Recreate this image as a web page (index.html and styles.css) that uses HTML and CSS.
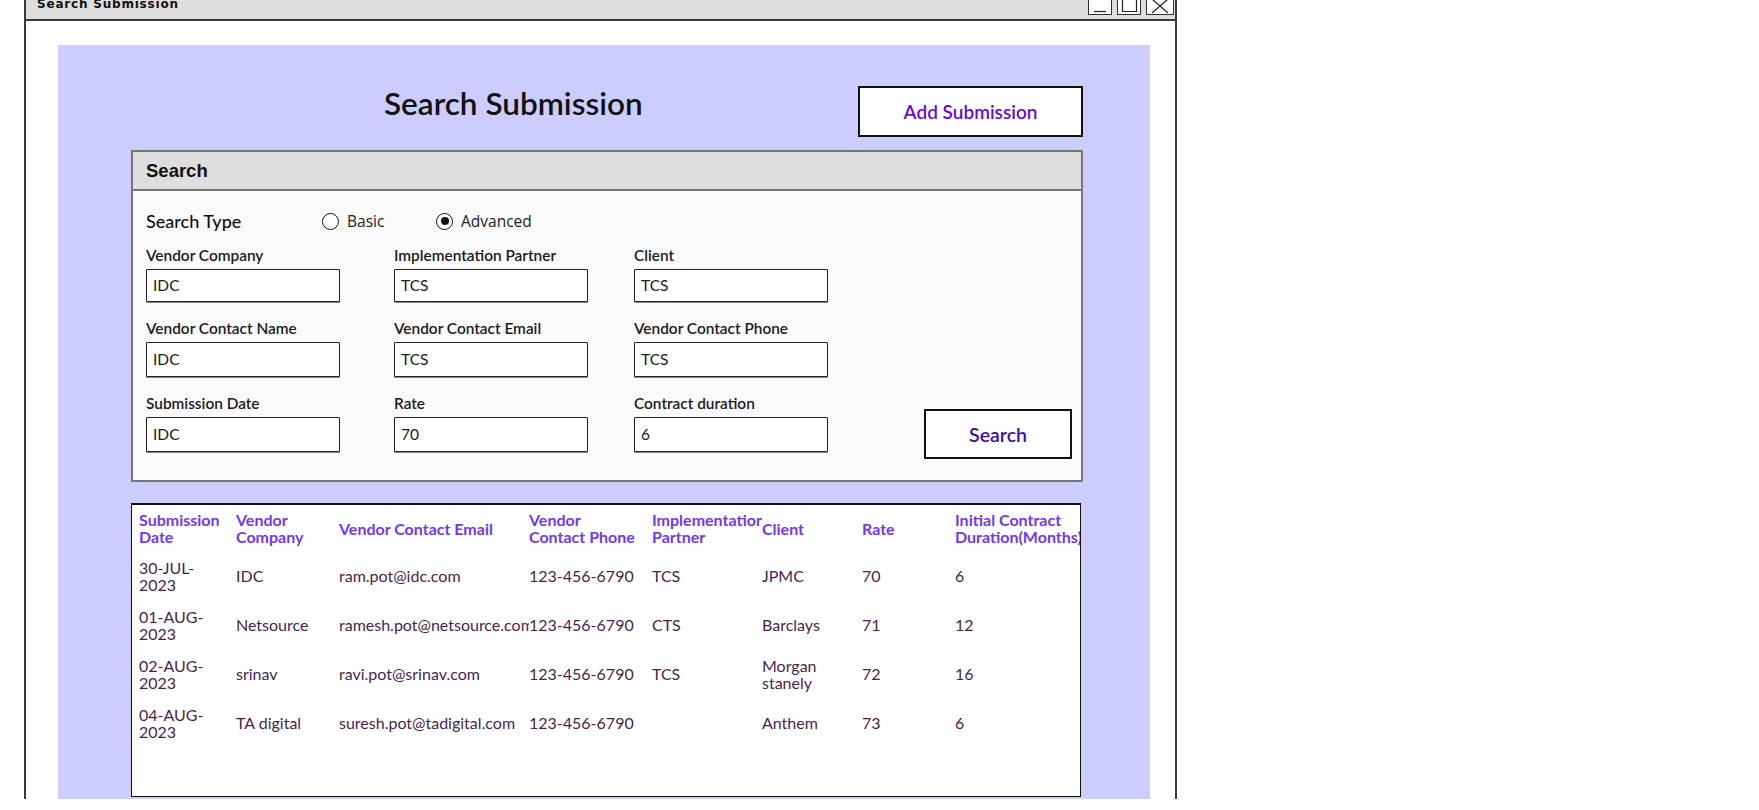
FILE: index.html
```html
<!DOCTYPE html>
<html>
<head>
<meta charset="utf-8">
<title>Search Submission</title>
<link rel="stylesheet" href="styles.css">
</head>
<body>
<div class="window">
  <div class="titlebar">
    <span class="wtitle">Search Submission</span>
    <div class="wctrls">
      <span class="wbtn"><svg width="25" height="20" viewBox="0 0 25 20"><path d="M6 16.5 H18" stroke="#222" stroke-width="1.2" fill="none"/></svg></span>
      <span class="wbtn"><svg width="25" height="20" viewBox="0 0 25 20"><path d="M5.5 4 V16.5 H19.5 V4" stroke="#222" stroke-width="1.2" fill="none"/></svg></span>
      <span class="wbtn wide"><svg width="28" height="20" viewBox="0 0 28 20"><path d="M6 4 L22 18 M22 4 L6 18" stroke="#222" stroke-width="1.2" fill="none"/></svg></span>
    </div>
  </div>
  <div class="wbody">
    <div class="panel">
      <div class="head">
        <h1 class="title">Search Submission</h1>
        <button class="btn add">Add Submission</button>
      </div>

      <div class="fieldset">
        <div class="fs-head">Search</div>
        <div class="fs-body">
          <div class="stype">
            <span class="stype-label">Search Type</span>
            <span class="radio basic"><span class="circle"></span>Basic</span>
            <span class="radio"><span class="circle on"></span>Advanced</span>
          </div>
          <div class="fields-wrap">
            <div class="fields">
              <div class="field"><span class="lbl">Vendor Company</span><span class="inp">IDC</span></div>
              <div class="field"><span class="lbl">Implementation Partner</span><span class="inp">TCS</span></div>
              <div class="field"><span class="lbl">Client</span><span class="inp">TCS</span></div>
              <div class="field"><span class="lbl">Vendor Contact Name</span><span class="inp tall">IDC</span></div>
              <div class="field"><span class="lbl">Vendor Contact Email</span><span class="inp tall">TCS</span></div>
              <div class="field"><span class="lbl">Vendor Contact Phone</span><span class="inp tall">TCS</span></div>
              <div class="field"><span class="lbl">Submission Date</span><span class="inp tall">IDC</span></div>
              <div class="field"><span class="lbl">Rate</span><span class="inp tall">70</span></div>
              <div class="field"><span class="lbl">Contract duration</span><span class="inp tall">6</span></div>
            </div>
            <button class="btn search">Search</button>
          </div>
        </div>
      </div>

      <div class="grid">
        <table>
          <colgroup>
            <col class="c1"><col class="c2"><col class="c3"><col class="c4"><col class="c5"><col class="c6"><col class="c7"><col class="c8">
          </colgroup>
          <thead>
            <tr>
              <th>Submission Date</th>
              <th>Vendor Company</th>
              <th>Vendor Contact Email</th>
              <th>Vendor Contact Phone</th>
              <th>Implementation Partner</th>
              <th>Client</th>
              <th>Rate</th>
              <th>Initial Contract Duration(Months)</th>
            </tr>
          </thead>
          <tbody>
            <tr><td>30-JUL-2023</td><td>IDC</td><td>ram.pot@idc.com</td><td>123-456-6790</td><td>TCS</td><td>JPMC</td><td>70</td><td>6</td></tr>
            <tr><td>01-AUG-2023</td><td>Netsource</td><td>ramesh.pot@netsource.com</td><td>123-456-6790</td><td>CTS</td><td>Barclays</td><td>71</td><td>12</td></tr>
            <tr><td>02-AUG-2023</td><td>srinav</td><td>ravi.pot@srinav.com</td><td>123-456-6790</td><td>TCS</td><td>Morgan stanely</td><td>72</td><td>16</td></tr>
            <tr><td>04-AUG-2023</td><td>TA digital</td><td>suresh.pot@tadigital.com</td><td>123-456-6790</td><td></td><td>Anthem</td><td>73</td><td>6</td></tr>
          </tbody>
        </table>
      </div>
    </div>
  </div>
</div>
</body>
</html>
```
FILE: styles.css
```css
* { box-sizing: border-box; }
html, body { margin: 0; padding: 0; background: #fff; }
body { width: 1759px; height: 810px; overflow: hidden; font-family: "Lato", "Liberation Sans", sans-serif; }

.window {
  margin-left: 24px;
  margin-top: -8px;
  width: 1153px;
  border-left: 2px solid #3a3a3a;
  border-right: 2px solid #3a3a3a;
  background: #fff;
}
.titlebar {
  height: 29px;
  background: #dedede;
  border-bottom: 2px solid #3a3a3a;
  display: flex;
  justify-content: space-between;
  align-items: flex-start;
}
.wtitle {
  font-family: "DejaVu Sans", "Liberation Sans", sans-serif;
  font-weight: bold;
  font-size: 12px;
  line-height: 13px;
  letter-spacing: 0.8px;
  color: #111;
  padding: 6px 0 0 11px;
}
.wctrls { display: flex; gap: 5px; padding-top: 3px; margin-right: 1px; }
.wbtn {
  width: 24px; height: 20px;
  border: 1px solid #333;
  background: #fff;
  display: block;
}
.wbtn.wide { width: 28px; }
.wbtn svg { display: block; margin: -1px; }

.wbody { padding: 24px 25px 0 32px; }
.panel {
  background: #ccccff;
  height: 754px;
  padding: 41px 67px 0 73px;
  display: flex;
  flex-direction: column;
}

.head { display: flex; align-items: flex-start; height: 51px; }
.title {
  margin: 0 0 0 253px;
  font-size: 31.5px;
  font-weight: 600;
  line-height: 34px;
  color: #111;
  width: 474px;
}
.btn {
  font-family: "Lato", "Liberation Sans", sans-serif;
  background: #fff;
  border: 2px solid #111;
  cursor: pointer;
  padding: 0;
}
.add {
  width: 225px; height: 51px;
  font-size: 19px; font-weight: 600;
  color: #6a08d8;
}

.fieldset {
  margin-top: 13px;
  width: 952px;
  border: 2px solid #767676;
  background: #fafafa;
}
.fs-head {
  height: 39px;
  background: #dedede;
  border-bottom: 2px solid #767676;
  font-family: "Liberation Sans", Arial, sans-serif;
  font-weight: bold;
  font-size: 18.5px;
  line-height: 37px;
  padding-left: 13px;
  color: #111;
}
.fs-body { padding: 18px 9px 21px 13px; }
.stype { display: flex; align-items: center; height: 24px; }
.stype-label { width: 176px; font-size: 18px; font-weight: 500; color: #111; }
.radio {
  display: flex; align-items: center;
  font-family: "Open Sans", "Liberation Sans", sans-serif;
  font-size: 15.5px; color: #222;
}
.radio.basic { width: 114px; }
.circle {
  width: 17px; height: 17px;
  border: 1.5px solid #111;
  border-radius: 50%;
  background: #fff;
  margin-right: 8px;
  display: flex; align-items: center; justify-content: center;
}
.circle.on::after {
  content: "";
  width: 8px; height: 8px; border-radius: 50%; background: #111;
}

.fields-wrap { display: flex; justify-content: space-between; align-items: flex-end; margin-top: 13px; }
.fields {
  display: grid;
  grid-template-columns: 248px 240px 194px;
  row-gap: 17px;
  margin-bottom: 7px;
}
.field { display: flex; flex-direction: column; }
.lbl {
  font-size: 15.4px; font-weight: 600; color: #1a1a1a;
  line-height: 18px; height: 18px;
}
.inp {
  margin-top: 5px;
  width: 194px; height: 33px;
  border: 1px solid #222;
  border-radius: 1px;
  background: #fff;
  font-size: 15.5px;
  line-height: 31px;
  padding-left: 6px;
  color: #1a1a1a;
  box-shadow: 0 1px 0 #888;
}
.inp.tall { height: 35px; line-height: 33px; }
.search {
  width: 148px; height: 50px;
  font-size: 19.5px; font-weight: 600;
  color: #3d0aa8;
}

.grid {
  margin-top: 21px;
  width: 950px;
  height: 294px;
  border: 1px solid #111;
  border-top: 2px solid #111;
  background: #fff;
  padding-left: 7px;
  overflow: hidden;
}
table {
  table-layout: fixed;
  border-collapse: collapse;
  width: 942px;
}
col.c1 { width: 97px; }
col.c2 { width: 103px; }
col.c3 { width: 190px; }
col.c4 { width: 123px; }
col.c5 { width: 110px; }
col.c6 { width: 100px; }
col.c7 { width: 93px; }
col.c8 { width: 126px; }
th, td {
  padding: 0 14px 0 0;
  height: 49px;
  text-align: left;
  vertical-align: middle;
  overflow: hidden;
  line-height: 17px;
}
th {
  height: 46px;
  font-size: 16px;
  font-weight: 700;
  color: #7038f5;
}
td {
  font-size: 16px;
  font-weight: 400;
  color: #4a1f4e;
}
```
